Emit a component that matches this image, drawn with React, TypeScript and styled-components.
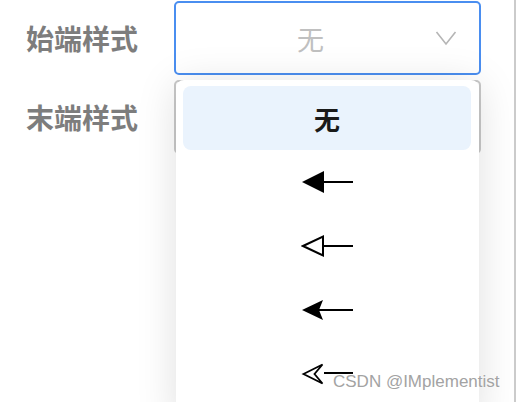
import React from "react";
import styled, { createGlobalStyle } from "styled-components";

const Global = createGlobalStyle`
  html, body { margin: 0; padding: 0; background: #ffffff; }
  body { width: 516px; height: 402px; overflow: hidden; }
`;

const Page = styled.div`
  position: relative;
  box-sizing: border-box;
  width: 516px;
  height: 402px;
  border-right: 2px solid #cbcbcb;
  background: #ffffff;
  overflow: hidden;
  font-family: "Noto Sans CJK SC", "Noto Sans", sans-serif;
`;

const Form = styled.div`
  display: grid;
  grid-template-columns: 174px 307px;
  row-gap: 5px;
  padding-top: 1px;
`;

const Label = styled.div`
  display: flex;
  align-items: center;
  padding-left: 26px;
  font-size: 28px;
  font-weight: 700;
  color: #7d7d7d;
  line-height: 1;
`;

const SelectBox = styled.div<{ $focused?: boolean }>`
  position: relative;
  box-sizing: border-box;
  height: 74px;
  display: flex;
  align-items: center;
  padding-left: 12px;
  border: 2px solid ${(p) => (p.$focused ? "#4a8ef0" : "#c9c9c9")};
  border-radius: 5px;
  background: #ffffff;
`;

const Value = styled.div`
  flex: 1;
  text-align: center;
  font-size: 27px;
  color: #c0c0c0;
  line-height: 1;
  padding-right: 2px;
`;

const Chevron = styled.svg`
  width: 22px;
  height: 16px;
  margin-right: 22px;
  flex: none;
`;

const Menu = styled.div`
  position: absolute;
  left: 0;
  top: -2px;
  width: 303px;
  height: 340px;
  box-sizing: border-box;
  padding: 6px 8px 0 7px;
  background: #ffffff;
  border-radius: 8px 8px 0 0;
  box-shadow: 0 4px 40px rgba(0, 0, 0, 0.13);
  z-index: 2;
`;

const Option = styled.div<{ $active?: boolean }>`
  height: 64px;
  display: flex;
  align-items: center;
  justify-content: center;
  border-radius: 8px;
  background: ${(p) => (p.$active ? "#eaf3fd" : "transparent")};
  font-size: 26px;
  font-weight: 700;
  color: #1a1a1a;
`;

const ArrowSvg = styled.svg`
  width: 52px;
  height: 24px;
  display: block;
`;

const Watermark = styled.div`
  position: absolute;
  left: 333px;
  top: 372px;
  font-family: "Liberation Sans", Arial, sans-serif;
  font-size: 17px;
  color: #a3a3a3;
  white-space: nowrap;
  z-index: 3;
  text-shadow: 0 0 2px rgba(255, 255, 255, 0.9);
`;

type Kind = "filled" | "hollow" | "stealth" | "hollowStealth";

function Arrow({ kind }: { kind: Kind }) {
  const lineStart = kind === "stealth" ? 18 : 23;
  return (
    <ArrowSvg viewBox="0 0 52 24">
      {kind === "filled" && <polygon points="1,12 23,1 23,23" fill="#000" />}
      {kind === "hollow" && (
        <polygon points="2,12 22,2.5 22,21.5" fill="none" stroke="#000" strokeWidth="2" />
      )}
      {kind === "stealth" && <path d="M1 12 L22 2 L18 12 L22 22 Z" fill="#000" />}
      {kind === "hollowStealth" && (
        <path
          d="M2.5 12 L21.5 2.5 L13.5 12 L21.5 21.5 Z"
          fill="none"
          stroke="#000"
          strokeWidth="1.8"
          strokeLinejoin="miter"
        />
      )}
      <line x1={lineStart} y1={kind === "hollowStealth" ? 11 : 12} x2="52" y2={kind === "hollowStealth" ? 11 : 12} stroke="#000" strokeWidth="2" />
    </ArrowSvg>
  );
}

export default function App() {
  return (
    <Page>
      <Global />
      <Form>
        <Label>始端样式</Label>
        <SelectBox $focused>
          <Value>无</Value>
          <Chevron viewBox="0 0 22 16">
            <polyline points="1.5,2 11,14 20.5,2" fill="none" stroke="#b5b5b5" strokeWidth="1.6" />
          </Chevron>
        </SelectBox>
        <Label>末端样式</Label>
        <SelectBox>
          <Menu>
            <Option $active>无</Option>
            <Option>
              <Arrow kind="filled" />
            </Option>
            <Option>
              <Arrow kind="hollow" />
            </Option>
            <Option>
              <Arrow kind="stealth" />
            </Option>
            <Option>
              <Arrow kind="hollowStealth" />
            </Option>
          </Menu>
        </SelectBox>
      </Form>
      <Watermark>CSDN @IMplementist</Watermark>
    </Page>
  );
}
